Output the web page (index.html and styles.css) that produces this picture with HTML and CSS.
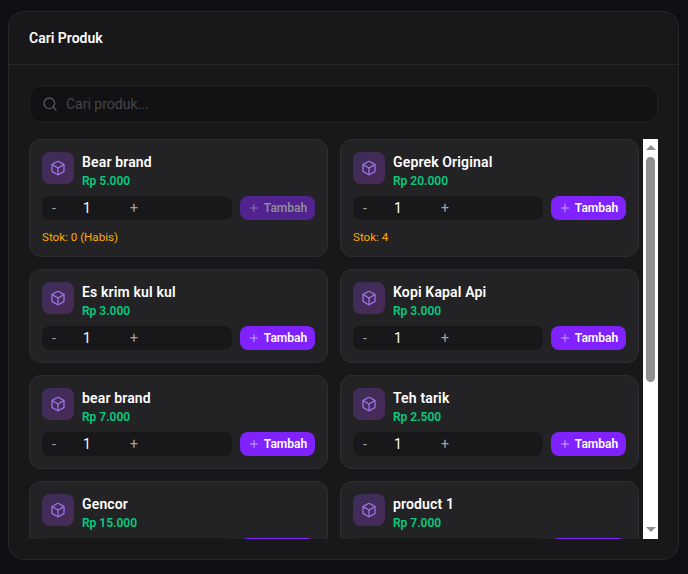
FILE: index.html
```html
<!DOCTYPE html>
<html lang="id">
<head>
<meta charset="utf-8">
<title>Cari Produk</title>
<link rel="stylesheet" href="styles.css">
</head>
<body>
<svg class="defs" width="0" height="0" aria-hidden="true">
  <symbol id="box" viewBox="0 0 24 24"><path d="M21 8a2 2 0 0 0-1-1.73l-7-4a2 2 0 0 0-2 0l-7 4A2 2 0 0 0 3 8v8a2 2 0 0 0 1 1.73l7 4a2 2 0 0 0 2 0l7-4A2 2 0 0 0 21 16Z"/><path d="m3.3 7 8.7 5 8.7-5"/><path d="M12 22V12"/></symbol>
  <symbol id="plus" viewBox="0 0 24 24"><path d="M5 12h14"/><path d="M12 5v14"/></symbol>
</svg>
<main class="panel">
  <header class="panel-head"><h2>Cari Produk</h2></header>
  <div class="panel-body">
    <div class="search">
      <svg class="search-icon" viewBox="0 0 24 24"><circle cx="11" cy="11" r="8"/><path d="m21 21-4.3-4.3"/></svg>
      <span>Cari produk...</span>
    </div>
    <div class="scroller">
      <div class="grid">
        <article class="card">
          <div class="info"><div class="thumb"><svg class="box"><use href="#box"/></svg></div><div><h3>Bear brand</h3><p class="price">Rp 5.000</p></div></div>
          <div class="actions"><div class="stepper"><span class="step minus">-</span><span class="qty">1</span><span class="step">+</span></div><button class="add off"><svg class="plus"><use href="#plus"/></svg>Tambah</button></div>
          <p class="stock">Stok: 0 (Habis)</p>
        </article>
        <article class="card">
          <div class="info"><div class="thumb"><svg class="box"><use href="#box"/></svg></div><div><h3>Geprek Original</h3><p class="price">Rp 20.000</p></div></div>
          <div class="actions"><div class="stepper"><span class="step minus">-</span><span class="qty">1</span><span class="step">+</span></div><button class="add"><svg class="plus"><use href="#plus"/></svg>Tambah</button></div>
          <p class="stock">Stok: 4</p>
        </article>
        <article class="card">
          <div class="info"><div class="thumb"><svg class="box"><use href="#box"/></svg></div><div><h3>Es krim kul kul</h3><p class="price">Rp 3.000</p></div></div>
          <div class="actions"><div class="stepper"><span class="step minus">-</span><span class="qty">1</span><span class="step">+</span></div><button class="add"><svg class="plus"><use href="#plus"/></svg>Tambah</button></div>
        </article>
        <article class="card">
          <div class="info"><div class="thumb"><svg class="box"><use href="#box"/></svg></div><div><h3>Kopi Kapal Api</h3><p class="price">Rp 3.000</p></div></div>
          <div class="actions"><div class="stepper"><span class="step minus">-</span><span class="qty">1</span><span class="step">+</span></div><button class="add"><svg class="plus"><use href="#plus"/></svg>Tambah</button></div>
        </article>
        <article class="card">
          <div class="info"><div class="thumb"><svg class="box"><use href="#box"/></svg></div><div><h3>bear brand</h3><p class="price">Rp 7.000</p></div></div>
          <div class="actions"><div class="stepper"><span class="step minus">-</span><span class="qty">1</span><span class="step">+</span></div><button class="add"><svg class="plus"><use href="#plus"/></svg>Tambah</button></div>
        </article>
        <article class="card">
          <div class="info"><div class="thumb"><svg class="box"><use href="#box"/></svg></div><div><h3>Teh tarik</h3><p class="price">Rp 2.500</p></div></div>
          <div class="actions"><div class="stepper"><span class="step minus">-</span><span class="qty">1</span><span class="step">+</span></div><button class="add"><svg class="plus"><use href="#plus"/></svg>Tambah</button></div>
        </article>
        <article class="card">
          <div class="info"><div class="thumb"><svg class="box"><use href="#box"/></svg></div><div><h3>Gencor</h3><p class="price">Rp 15.000</p></div></div>
          <div class="actions"><div class="stepper"><span class="step minus">-</span><span class="qty">1</span><span class="step">+</span></div><button class="add"><svg class="plus"><use href="#plus"/></svg>Tambah</button></div>
        </article>
        <article class="card">
          <div class="info"><div class="thumb"><svg class="box"><use href="#box"/></svg></div><div><h3>product 1</h3><p class="price">Rp 7.000</p></div></div>
          <div class="actions"><div class="stepper"><span class="step minus">-</span><span class="qty">1</span><span class="step">+</span></div><button class="add"><svg class="plus"><use href="#plus"/></svg>Tambah</button></div>
        </article>
      </div>
      <div class="scrollbar">
        <span class="arrow up"></span>
        <div class="track"><div class="thumb-bar"></div></div>
        <span class="arrow down"></span>
      </div>
    </div>
  </div>
</main>
</body>
</html>
```
FILE: styles.css
```css
* { box-sizing: border-box; }
html, body { height: 100%; }
body {
  margin: 0;
  padding: 11px 9px 14px 8px;
  background: #0f0f14;
  font-family: Roboto, "Noto Sans", sans-serif;
  color: #fff;
  overflow: hidden;
}
.defs { position: absolute; }
h2, h3, p { margin: 0; }
.panel {
  height: 549px;
  background: #18181b;
  border: 1px solid #27272a;
  border-radius: 16px;
  overflow: hidden;
}
.panel-head {
  height: 53px;
  padding: 0 20px;
  display: flex;
  align-items: center;
  border-bottom: 1px solid #27272a;
}
.panel-head h2 { font-size: 14px; font-weight: 600; line-height: 20px; }
.panel-body { padding: 20px 20px 0; }
.search {
  height: 38px;
  display: flex;
  align-items: center;
  gap: 8px;
  padding: 0 12px;
  background: #121215;
  border: 1px solid #232326;
  border-radius: 12px;
  color: #45454b;
  font-size: 14px;
}
.search-icon {
  width: 16px;
  height: 16px;
  fill: none;
  stroke: #56565c;
  stroke-width: 2;
  stroke-linecap: round;
  stroke-linejoin: round;
}
.scroller {
  margin-top: 16px;
  height: 400px;
  display: flex;
  overflow: hidden;
}
.grid {
  width: 614px;
  flex: none;
  display: grid;
  grid-template-columns: 299px 299px;
  column-gap: 12px;
  row-gap: 12px;
  align-content: start;
  align-items: start;
}
.card {
  background: #232326;
  border: 1px solid #2f2f33;
  border-radius: 12px;
  padding: 12px;
}
.info { display: flex; gap: 8px; align-items: flex-start; }
.thumb {
  width: 32px;
  height: 32px;
  flex: none;
  border-radius: 8px;
  background: linear-gradient(135deg, #3c2e58, #4a2a58);
  display: flex;
  align-items: center;
  justify-content: center;
}
.box {
  width: 16px;
  height: 16px;
  fill: none;
  stroke: #9a72e6;
  stroke-width: 2;
  stroke-linecap: round;
  stroke-linejoin: round;
}
h3 { font-size: 14px; font-weight: 600; line-height: 20px; letter-spacing: 0.15px; }
.price { font-size: 12px; font-weight: 600; line-height: 16px; margin-top: 1px; color: #08c97e; }
.actions { display: flex; gap: 8px; margin-top: 7px; }
.stepper {
  width: 190px;
  height: 24px;
  display: flex;
  align-items: center;
  background: #18181b;
  border-radius: 8px;
  font-size: 14px;
}
.step { width: 24px; text-align: center; color: #a1a1aa; line-height: 24px; }
.qty { width: 56px; padding-left: 17px; color: #fff; line-height: 24px; }
.add {
  width: 75px;
  height: 24px;
  padding: 0;
  border: 0;
  border-radius: 8px;
  background: #7f22fe;
  color: #fff;
  font: 600 12px Roboto, "Noto Sans", sans-serif;
  display: flex;
  align-items: center;
  justify-content: center;
  gap: 4px;
}
.add.off { background: #51238f; color: #8e8a98; }
.add.off .plus { stroke: #8e7aa8; }
.plus {
  width: 12px;
  height: 12px;
  fill: none;
  stroke: #c9a8ff;
  stroke-width: 2;
  stroke-linecap: round;
}
.stock { margin-top: 10px; font-size: 11.6px; line-height: 14px; color: #fdab00; }
.scrollbar {
  width: 15px;
  height: 400px;
  flex: none;
  background: #fff;
  display: flex;
  flex-direction: column;
  align-items: center;
}
.arrow { width: 0; height: 0; border-left: 5px solid transparent; border-right: 5px solid transparent; flex: none; }
.up { border-bottom: 5px solid #8f8f8f; margin-top: 6px; }
.down { border-top: 5px solid #8f8f8f; margin-bottom: 7px; }
.track { flex: 1; width: 100%; padding: 7px 3px 0 3px; }
.thumb-bar { height: 225px; width: 9px; background: #8f8f8f; border-radius: 5px; }
```
